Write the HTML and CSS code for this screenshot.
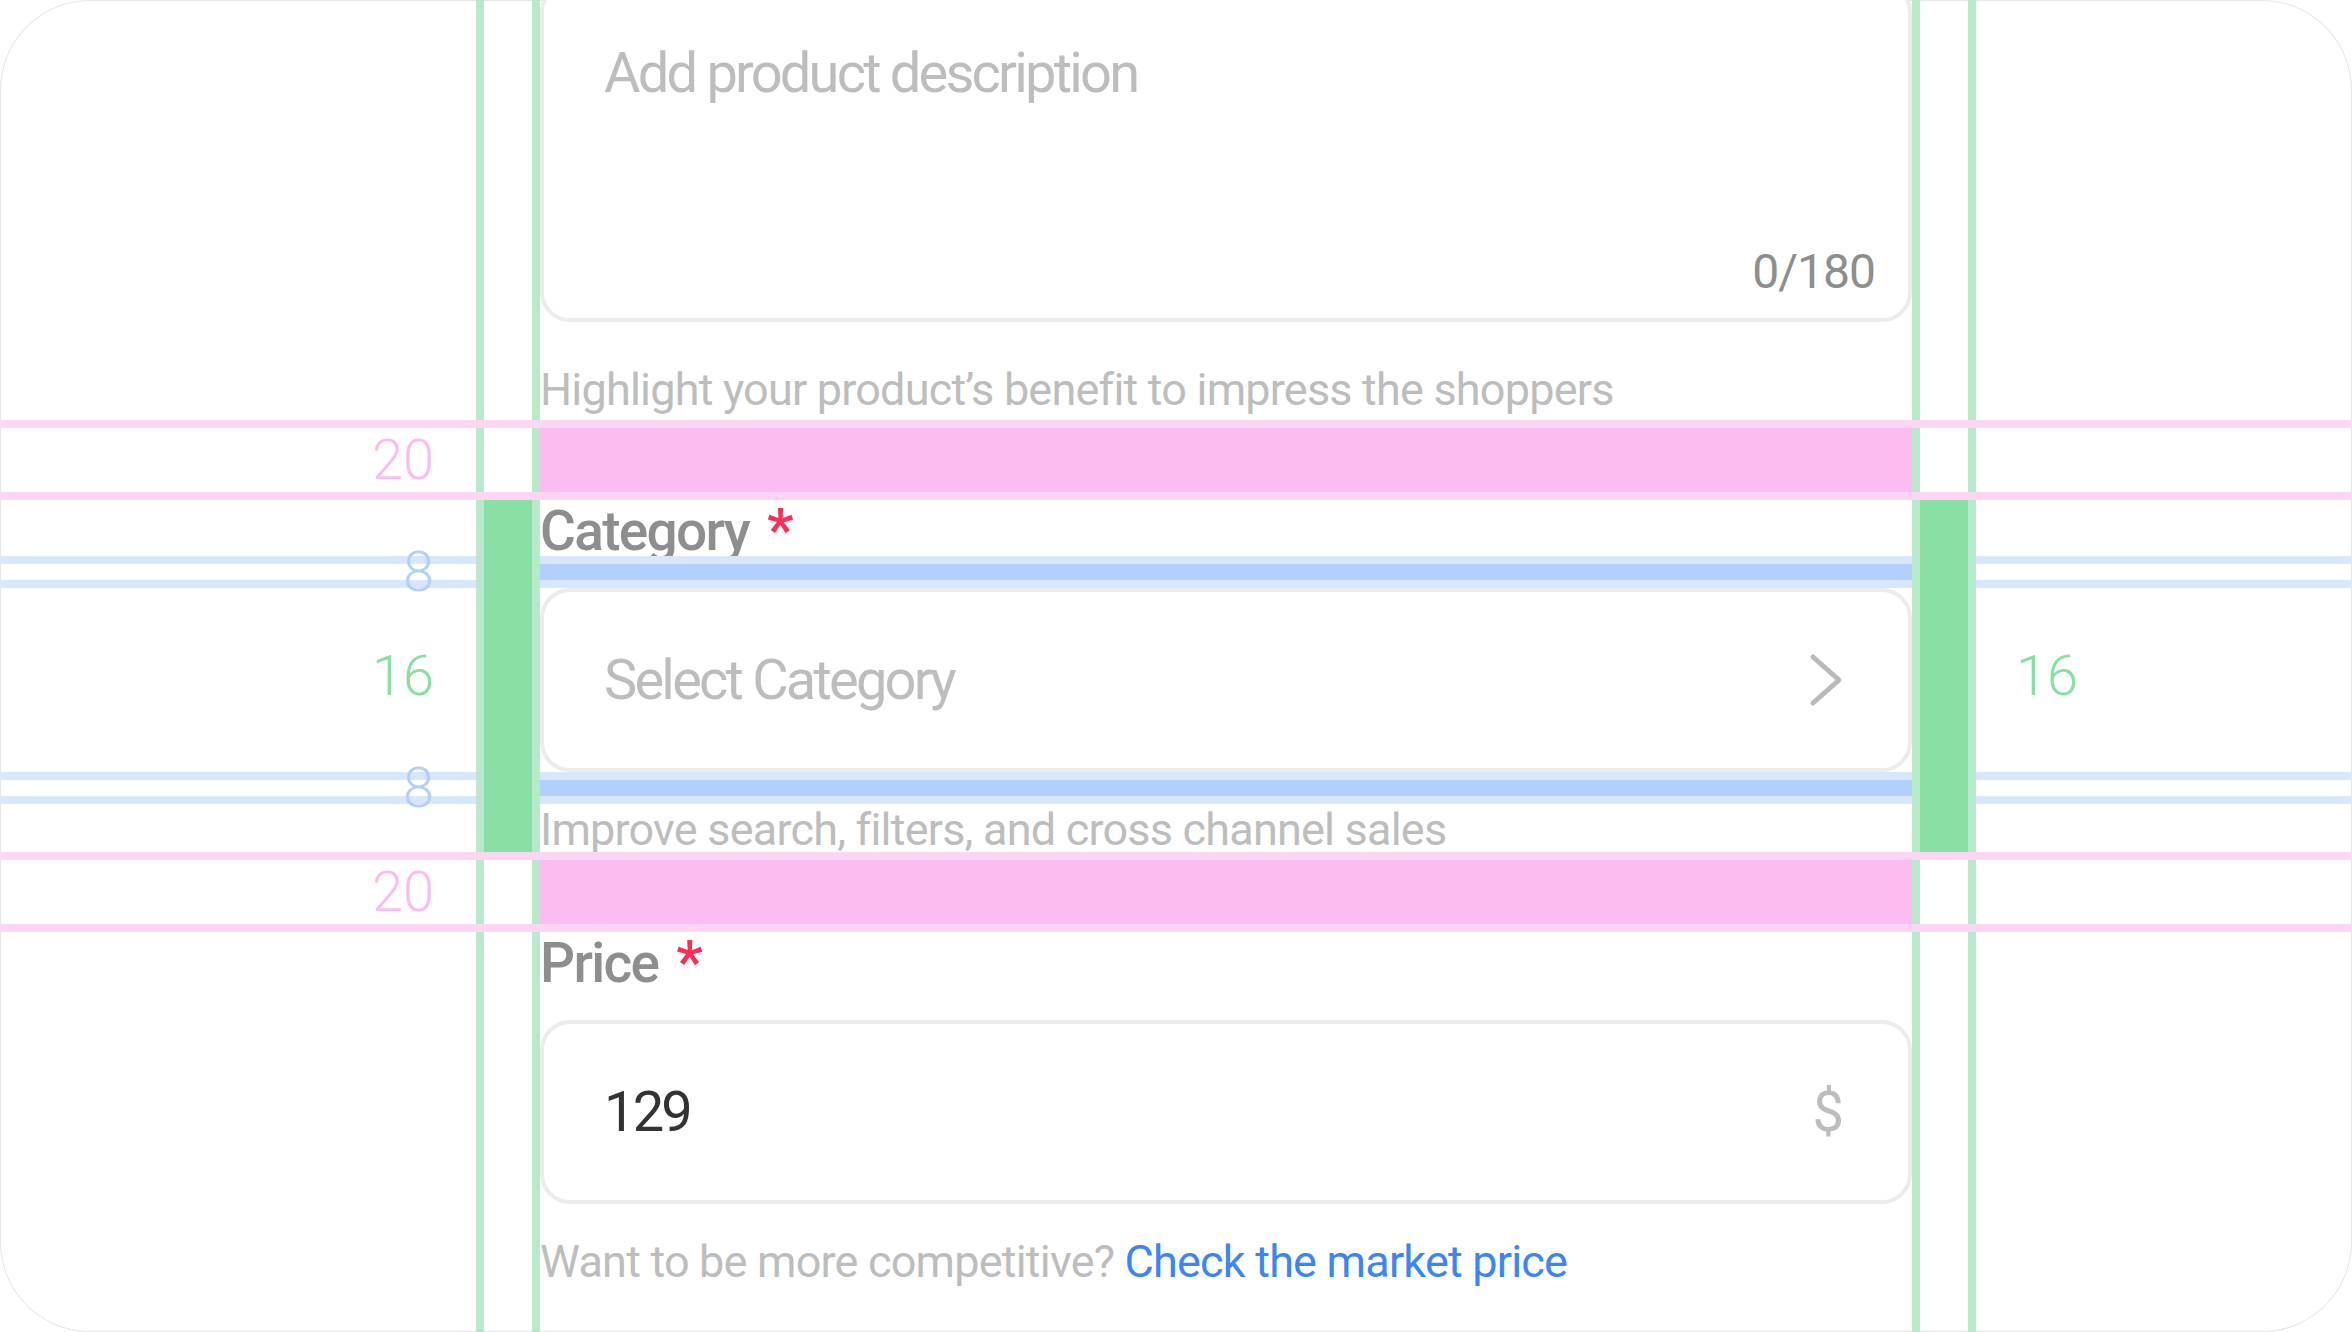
FILE: index.html
```html
<!DOCTYPE html>
<html lang="en">
<head>
    <meta charset="UTF-8">
    <meta name="viewport" content="width=device-width, initial-scale=1.0">
    <title>Product Form Spacing</title>
    <link rel="stylesheet" href="styles.css">
</head>
<body>
    <div class="frame">
        <!-- column guides -->
        <div class="guide guide-a"></div>
        <div class="guide guide-b"></div>
        <div class="guide guide-c"></div>
        <div class="guide guide-d"></div>

        <div class="form">
            <div class="field field-desc">
                <div class="textbox textarea">
                    <span class="placeholder">Add product description</span>
                    <span class="counter">0/180</span>
                </div>
                <p class="hint">Highlight your product’s benefit to impress the shoppers</p>
            </div>

            <div class="gap gap-20"><span class="mark">20</span></div>

            <div class="field field-spec">
                <span class="pad pad-left">16</span>
                <span class="pad pad-right">16</span>
                <label class="label">Category <span class="req">*</span></label>
                <div class="gap gap-8"><span class="mark">8</span></div>
                <div class="textbox select">
                    <span class="placeholder">Select Category</span>
                    <svg class="chevron" width="36" height="56" viewBox="0 0 36 56">
                        <path d="M5 5 L31 28 L5 51" fill="none" stroke="#bababa" stroke-width="5" stroke-linecap="round" stroke-linejoin="round"/>
                    </svg>
                </div>
                <div class="gap gap-8"><span class="mark">8</span></div>
                <p class="hint">Improve search, filters, and cross channel sales</p>
            </div>

            <div class="gap gap-20"><span class="mark">20</span></div>

            <div class="field">
                <label class="label">Price <span class="req">*</span></label>
                <div class="spacer"></div>
                <div class="textbox">
                    <span class="value">129</span>
                    <span class="suffix">$</span>
                </div>
                <div class="spacer"></div>
                <p class="hint">Want to be more competitive? <a href="#" class="link">Check the market price</a></p>
            </div>
        </div>
    </div>
</body>
</html>
```

FILE: styles.css
```css
body {
    margin: 0;
    background: #fff;
    font-family: "Roboto", "Liberation Sans", sans-serif;
}
.frame {
    position: relative;
    height: 100vh;
    border-radius: 90px;
    box-shadow: inset 0 0 0 1px #e6e6e6;
    overflow: hidden;
}

/* vertical spec lines */
.guide {
    position: absolute;
    top: 0;
    bottom: 0;
    width: 8px;
    background: #b8e9ca;
    z-index: 3;
}
.guide-a { left: 476px; }
.guide-b { left: 532px; }
.guide-c { left: 1912px; }
.guide-d { left: 1968px; }

.form {
    width: 1372px;
    margin-left: 540px;
}
.field {
    position: relative;
}

/* inputs */
.textbox {
    box-sizing: border-box;
    height: 184px;
    display: flex;
    align-items: center;
    justify-content: space-between;
    padding: 0 64px 0 60px;
    border: 4px solid #ececec;
    border-radius: 30px;
    background: #fff;
    font-size: 56px;
    line-height: 56px;
    letter-spacing: -2.8px;
}
.textarea {
    height: 340px;
    margin-top: -18px;
    flex-direction: column;
    align-items: stretch;
    padding: 59px 33px 22px 60px;
}
.placeholder {
    color: #bdbdbd;
}
.counter {
    align-self: flex-end;
    font-size: 48px;
    line-height: 48px;
    letter-spacing: -1px;
    color: #8e8e8e;
}
.value {
    color: #333;
}
.suffix {
    color: #bdbdbd;
    letter-spacing: 0;
}
.chevron {
    flex: none;
}

.label {
    display: block;
    box-sizing: border-box;
    height: 56px;
    padding-top: 2px;
    font-size: 55px;
    line-height: 56px;
    font-weight: 500;
    color: #8e8e8e;
    letter-spacing: -1.7px;
}
.req {
    margin-left: 6px;
    font-size: 60px;
    letter-spacing: 0;
    color: #ff2d55;
}
.hint {
    box-sizing: border-box;
    height: 48px;
    margin: 0;
    padding-top: 2px;
    font-size: 45px;
    line-height: 48px;
    color: #bdbdbd;
    letter-spacing: -0.8px;
    white-space: nowrap;
}
.field-desc .hint {
    margin: 42px 0 8px;
}
.link {
    color: #3a86f7;
    text-decoration: none;
}
.spacer {
    height: 32px;
}

/* spacing bands */
.gap {
    position: relative;
}
.gap::before,
.gap::after {
    content: '';
    position: absolute;
    left: -540px;
    width: 2352px;
    height: 8px;
}
.gap::before { top: 0; }
.gap::after { bottom: 0; }
.gap-20 {
    height: 80px;
    background: #fdbcf0;
}
.gap-20::before,
.gap-20::after {
    background: #fdd6f4;
    z-index: 4;
}
.gap-8 {
    height: 32px;
    background: #b2d0fc;
}
.gap-8::before,
.gap-8::after {
    background: #d7e7fd;
    z-index: 1;
}
.mark,
.pad {
    position: absolute;
    top: 0;
    bottom: 0;
    display: flex;
    align-items: center;
    font-size: 56px;
    line-height: 56px;
    font-weight: 300;
}
.mark {
    right: calc(100% + 106px);
}
.gap-20 .mark { color: #fdbcf0; }
.gap-8 .mark { color: #b2d0fc; z-index: 2; }

/* side padding bands of the select field */
.field-spec::before,
.field-spec::after {
    content: '';
    position: absolute;
    top: 0;
    bottom: 0;
    width: 48px;
    background: #88e0a5;
    z-index: 2;
}
.field-spec::before { left: -56px; }
.field-spec::after { right: -56px; }
.pad { color: #88e0a5; }
.pad-left { right: calc(100% + 106px); }
.pad-right { left: calc(100% + 104px); }
```
